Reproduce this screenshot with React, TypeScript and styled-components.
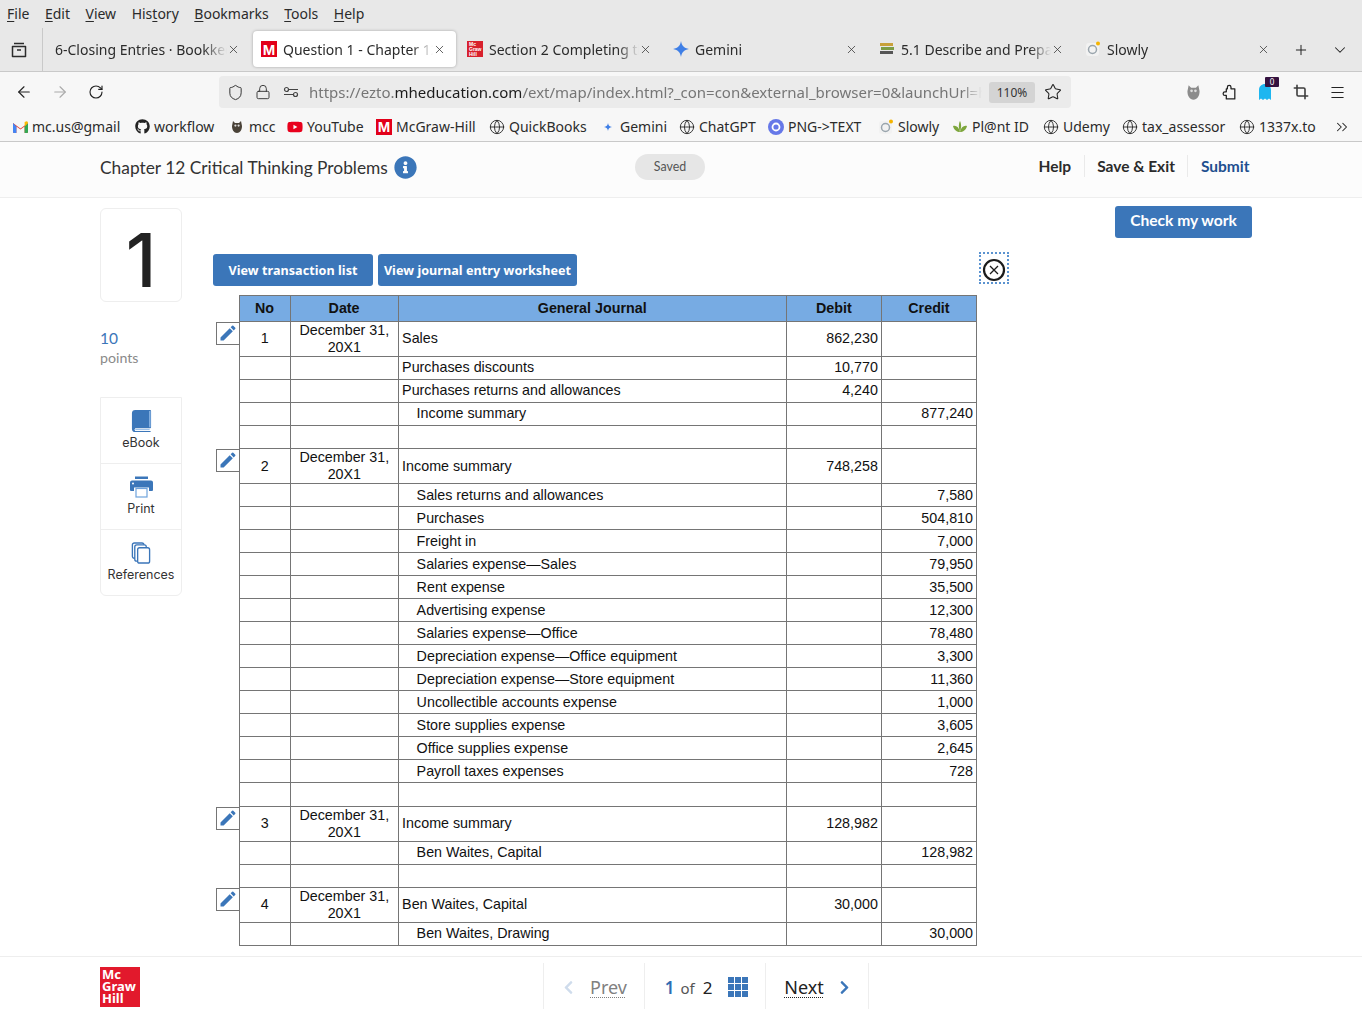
import React from "react";
import styled, { createGlobalStyle } from "styled-components";
import {
  ArrowLeft, ArrowRight, RotateCw, Shield, Lock, Star, Crop, Menu, X, Plus, ChevronDown, ChevronsRight, Globe,
} from "lucide-react";
import { FaGithub, FaYoutube, FaInfoCircle, FaChevronLeft, FaChevronRight } from "react-icons/fa";
import { MdEdit } from "react-icons/md";

const Global = createGlobalStyle`
  html, body { margin: 0; padding: 0; height: 1010px; overflow: hidden; background: #fff; }
  * { box-sizing: border-box; }
`;

const Page = styled.div`
  width: 1362px; height: 1010px; overflow: hidden; display: flex; flex-direction: column;
  font-family: "Noto Sans", sans-serif; color: #222;
`;
const MenuBar = styled.div`
  height: 28px; background: #e8e8e8; display: flex; align-items: center; padding: 0 0 1px 7px; gap: 15.5px;
  font-size: 14px; color: #2b2b2b;
`;
const MenuItem = styled.span`
  & u { text-decoration-thickness: 1px; text-underline-offset: 2px; }
`;
const TabBar = styled.div`
  height: 44px; background: #e8e8e8; display: flex; align-items: stretch; border-bottom: 1px solid #c9c9c9;
`;
const TabLead = styled.div`
  width: 43px; display: flex; align-items: center; justify-content: center; border-right: 1px solid #c9c9c9; padding-right: 4px;
`;
const TabStrip = styled.div`
  display: flex; gap: 3px; padding-left: 4px; width: 1240px;
`;
const Tab = styled.div<{ $active?: boolean }>`
  width: 203px; height: 36px; margin-top: 3px; flex: none; border-radius: 4px; padding: 0 10px 0 8px;
  display: flex; align-items: center; gap: 6px; font-size: 14px; color: #2b2b2b;
  background: ${(p) => (p.$active ? "#fff" : "transparent")};
  box-shadow: ${(p) => (p.$active ? "0 0 3px rgba(0,0,0,.3)" : "none")};
`;
const TabTitle = styled.span`
  flex: 1; min-width: 0; white-space: nowrap; overflow: hidden; margin-right: -6px;
  -webkit-mask-image: linear-gradient(to right, #000 86%, transparent 100%);
  mask-image: linear-gradient(to right, #000 86%, transparent 100%);
`;
const TabEnd = styled.div`
  display: flex; align-items: center; gap: 22px; padding-left: 10px;
`;
const RedM = styled.span<{ $s: number }>`
  width: ${(p) => p.$s}px; height: ${(p) => p.$s}px; background: #e2001a; color: #fff; flex: none;
  display: inline-flex; align-items: center; justify-content: center;
  font: 700 ${(p) => p.$s - 1}px/1 "Liberation Sans", sans-serif;
`;
const TinyMH = styled.span`
  width: 16px; height: 16px; background: #d8202c; color: #fff; flex: none;
  font: 700 5px/5px "Liberation Sans", sans-serif; padding: 1px 0 0 2px; white-space: pre;
`;
const NavBar = styled.div`
  height: 38px; background: #f7f7f7; display: flex; align-items: center; padding: 2px 0 0 6px;
`;
const NavBtn = styled.div`
  width: 36px; display: flex; align-items: center; justify-content: center;
`;
const UrlBar = styled.div`
  margin-left: 105px; width: 852px; height: 32px; border-radius: 4px; background: #ebebeb;
  display: flex; align-items: center; padding-left: 2px; font-size: 15px; color: #767676; flex: none;
`;
const UrlIcon = styled.div`
  width: 28px; display: flex; align-items: center; justify-content: center; flex: none;
`;
const UrlText = styled.div`
  width: 673px; overflow: hidden; white-space: nowrap; margin-left: 4px; flex: none;
  -webkit-mask-image: linear-gradient(to right, #000 97%, transparent 100%);
  mask-image: linear-gradient(to right, #000 97%, transparent 100%);
  & b { font-weight: 400; color: #1c1c1c; }
`;
const Zoom = styled.div`
  margin-left: 7px; width: 46px; height: 21px; background: #d4d4d4; border-radius: 3px; font-size: 12px; color: #333;
  display: flex; align-items: center; justify-content: center; flex: none;
`;
const StarBox = styled.div`
  width: 44px; display: flex; justify-content: center;
`;
const NavRight = styled.div`
  margin-left: 104px; display: flex; align-items: center;
`;
const Badge = styled.span`
  position: absolute; top: -6px; right: 4px; width: 14px; height: 10px; background: #35123f; color: #fff;
  font-size: 8px; line-height: 10px; text-align: center; border-radius: 1px;
`;
const BadgeHost = styled(NavBtn)`
  position: relative;
`;
const Bookmarks = styled.div`
  height: 32px; background: #f7f7f7; border-bottom: 1px solid #c9c9c9; display: flex; align-items: center; padding: 2px 0 0 12px;
  font-size: 14px; color: #2b2b2b;
`;
const Mark = styled.div<{ $w: number }>`
  flex: 0 0 ${(p) => p.$w}px; display: flex; align-items: center; gap: 4px; white-space: nowrap;
`;
const MarkIcon = styled.span`
  width: 16px; height: 16px; display: inline-flex; align-items: center; justify-content: center; flex: none;
`;
const AppHeader = styled.header`
  height: 56px; background: #fcfcfc; border-bottom: 1px solid #eeeeee; padding: 0 100px 6px 100px;
  display: flex; align-items: center; flex: none;
`;
const Title = styled.h1`
  margin: 2px 0 0; font: 400 17.35px "Lato", sans-serif; color: #333; display: flex; align-items: center; gap: 6px; width: 535px; flex: none;
`;
const Saved = styled.div`
  width: 70px; height: 26px; border-radius: 13px; background: #e6e6e6; color: #555; font: 400 12.4px "Lato", sans-serif;
  display: flex; align-items: center; justify-content: center;
`;
const HeadLinks = styled.nav`
  margin: -1px 0 0 auto; display: flex; align-items: center; font: 700 15.5px "Lato", sans-serif; color: #2b2b2b;
`;
const HeadLink = styled.a<{ $blue?: boolean; $sep?: boolean }>`
  padding: 2px 12.5px; color: ${(p) => (p.$blue ? "#1f4f8f" : "#2b2b2b")};
  border-left: ${(p) => (p.$sep ? "1px solid #eaeaea" : "none")};
`;
const Content = styled.main`
  flex: 1; display: flex; padding: 8px 0 0 100px; gap: 31px; min-height: 0;
`;
const Side = styled.aside`
  width: 82px; flex: none; display: flex; flex-direction: column; margin-top: 2px;
`;
const NumberCard = styled.div`
  height: 94px; border: 1px solid #eeeeee; border-radius: 6px; padding-top: 10px; display: flex; align-items: center; justify-content: center;
  font: 500 74px/1 "Inter", sans-serif; color: #222;
`;
const Points = styled.div`
  margin-top: 26px; font: 400 15.5px/20px "Lato", sans-serif; color: #3b76b9;
`;
const PointsLabel = styled.div`
  font: 400 14.2px/20px "Lato", sans-serif; color: #8a8a8a;
`;
const Tools = styled.div`
  margin-top: 29px; border: 1px solid #eeeeee; border-radius: 0 0 6px 6px; display: flex; flex-direction: column;
`;
const ToolItem = styled.div`
  height: 66px; display: flex; flex-direction: column; align-items: center; padding-top: 12px; gap: 3px;
  font: 400 12.5px/16px "Inter", sans-serif; color: #333; border-bottom: 1px solid #eeeeee;
  &:last-child { border-bottom: none; height: 65px; }
  & > svg { height: 22px; flex: none; }
`;
const Main = styled.div`
  width: 1039px; display: flex; flex-direction: column; flex: none;
`;
const CheckRow = styled.div`
  display: flex; justify-content: flex-end;
`;
const CheckBtn = styled.button`
  width: 137px; height: 32px; border: 0; border-radius: 3px; background: #3b76b9; color: #fff; padding: 0 0 5px;
  font: 700 15.6px "Lato", sans-serif;
`;
const ToolRow = styled.div`
  display: flex; align-items: flex-start; width: 796px; margin-top: 14px; gap: 5px;
`;
const BlueBtn = styled.button<{ $w: number }>`
  width: ${(p) => p.$w}px; height: 32px; border: 0; border-radius: 3px; background: #3b76b9; color: #fff; padding: 0;
  font: 700 12.6px "Noto Sans", sans-serif; letter-spacing: .05px; flex: none; margin-top: 2px;
`;
const CloseBox = styled.div`
  margin-left: auto; width: 30px; height: 32px; border: 2px dotted #5b93d0; padding-top: 3px; display: flex; align-items: center; justify-content: center;
`;
const Sheet = styled.table`
  margin-top: 9px; border-collapse: collapse; table-layout: fixed; width: 764px;
  font: 400 14.3px/17px "Liberation Sans", sans-serif; color: #111;
`;
const Gutter = styled.td`
  width: 26px; padding: 0; border: 0; vertical-align: top;
`;
const Pencil = styled.div`
  margin: 0 0 0 3px; width: 24px; height: 23px; padding-right: 1px; border: 1px solid #757575; border-right: 0; display: flex; align-items: center;
  justify-content: center; background: #fff; color: #3b76b9;
`;
const Th = styled.th<{ $w: number }>`
  width: ${(p) => p.$w}px; height: 26px; padding: 0; background: #77abe3; border: 1px solid #757575; font-weight: 700; text-align: center;
`;
const Td = styled.td<{ $align?: string; $indent?: boolean; $h: number; $up?: boolean }>`
  height: ${(p) => p.$h}px; border: 1px solid #757575; white-space: normal;
  padding: 0 3px ${(p) => (p.$up ? "2px" : "0")} ${(p) => (p.$indent ? "18px" : "3.5px")};
  text-align: ${(p) => p.$align || "left"};
`;
const FooterBar = styled.footer`
  height: 54px; border-top: 1px solid #eeeeee; padding-left: 100px; display: flex; flex: none;
`;
const Logo = styled.div`
  width: 40px; height: 40px; margin-top: 10px; background: #e2192c; color: #fff; padding: 1px 0 0 2px; flex: none;
  font: 700 13px/12px "Noto Sans", sans-serif; white-space: pre;
`;
const Pager = styled.div`
  margin-left: 403px; display: flex; height: 46px; margin-top: 6px; border-left: 1px solid #eeeeee;
`;
const PagerCell = styled.div<{ $w: number; $muted?: boolean; $gap?: number; $shift?: number }>`
  width: ${(p) => p.$w}px; border-right: 1px solid #eeeeee; display: flex; align-items: center; justify-content: center;
  gap: ${(p) => p.$gap ?? 14}px; padding: 2px 0 0 ${(p) => p.$shift ?? 0}px;
  font-size: 18px; color: ${(p) => (p.$muted ? "#808080" : "#222")};
`;
const PagerLink = styled.span`
  text-decoration: underline dotted 1px; text-underline-offset: 3px;
`;
const PageCount = styled.span`
  display: flex; align-items: baseline; gap: 6px; font-size: 17px;
  & b { color: #2f6db3; font-weight: 600; }
  & small { font-size: 15px; color: #555; margin-right: 2px; }
`;

const Gmail = () => (
  <svg width="15" height="12" viewBox="0 0 15 12"><path d="M0 2v9a1 1 0 0 0 1 1h2.4V5.6L7.5 8.6l4.1-3V12H14a1 1 0 0 0 1-1V2L7.5 7.4z" fill="#ea4335"/><path d="M0 2l3.4 3.6V12H1a1 1 0 0 1-1-1z" fill="#4285f4"/><path d="M15 2l-3.4 3.6V12H14a1 1 0 0 0 1-1z" fill="#34a853"/><path d="M11.6 5.6V1l2-.8c.6 0 1.4.6 1.4 1.8z" fill="#fbbc04"/></svg>
);
const Owl = ({ c = "#4a4238", s = 14 }: { c?: string; s?: number }) => (
  <svg width={s} height={s} viewBox="0 0 14 14"><path d="M3 1l2 2h4l2-2 1 5c0 4-2 7-5 7S2 10 2 6z" fill={c}/><circle cx="5.4" cy="5.6" r="1.1" fill="#ddd"/><circle cx="8.6" cy="5.6" r="1.1" fill="#ddd"/></svg>
);
const Sparkle = ({ s = 12, c = "#3f7fe6" }: { s?: number; c?: string }) => (
  <svg width={s} height={s} viewBox="0 0 12 12"><path d="M6 0c.5 3.400 2.100 5.300 6 6-3.900.7-5.500 2.600-6 6-.5-3.400-2.100-5.300-6-6 3.900-.7 5.500-2.600 6-6z" fill={c}/></svg>
);
const Books = () => (
  <svg width="16" height="14" viewBox="0 0 16 14"><rect x="1" y="1" width="13" height="3" fill="#c9a13a"/><rect x="2" y="5" width="13" height="3" fill="#7d9d45"/><rect x="1" y="9" width="13" height="3" fill="#555"/></svg>
);
const SlowlyIcon = () => (
  <svg width="16" height="16" viewBox="0 0 16 16"><rect x="1" y="2" width="13" height="13" rx="3" fill="#f2f2f2"/><circle cx="7.500" cy="8.500" r="4" fill="none" stroke="#9aa5ad" strokeWidth="1.500"/><circle cx="13" cy="2.500" r="2" fill="#f5b400"/></svg>
);
const PngIcon = () => (
  <svg width="16" height="16" viewBox="0 0 16 16"><circle cx="8" cy="8" r="8" fill="#6678e8"/><circle cx="8" cy="8" r="3.500" fill="none" stroke="#fff" strokeWidth="1.800"/></svg>
);
const Plant = () => (
  <svg width="16" height="14" viewBox="0 0 16 14"><path d="M8 12C7 7 4 5 1 6c1 4 4 6 7 6zM8 12c1-5 4-7 7-6-1 4-4 6-7 6zM8 11C6 7 7 3 8 1c1 2 2 6 0 10z" fill="#7da63c"/></svg>
);
const Archive = () => (
  <svg width="18" height="18" viewBox="0 0 18 18" fill="none" stroke="#2b2b2b" strokeWidth="1.500"><path d="M4 2.500h10M2.500 5.500h13v10h-13z" strokeLinejoin="round"/><path d="M7 9h4"/></svg>
);
const SiteSettings = () => (
  <svg width="16" height="16" viewBox="0 0 16 16" fill="none" stroke="#444" strokeWidth="1.200"><path d="M6 5.500h9M1 10.500h9"/><circle cx="3.500" cy="5.500" r="2"/><circle cx="12.500" cy="10.500" r="2"/></svg>
);
const Ghost = () => (
  <svg width="16" height="18" viewBox="0 0 16 18"><path d="M8 1c3.500 0 6 2.500 6 6v10l-2-1.500L10 17l-2-1.500L6 17l-2-1.500L2 17V7c0-3.500 2.500-6 6-6z" fill="#1eb6f0"/></svg>
);
const PuzzlePiece = () => (
  <svg width="17" height="17" viewBox="0 0 16 16" fill="none" stroke="#222" strokeWidth="1.200" strokeLinejoin="round"><path d="M6 4.500V3a1.700 1.700 0 0 1 3.400 0v1.500H13v9.500H5v-3.200H3.700a1.700 1.700 0 0 1 0-3.400H5V4.500z"/></svg>
);
const BookIcon = () => (
  <svg width="21" height="23" viewBox="0 0 21 23"><path d="M4 0h15.500a1 1 0 0 1 1 1v17a1 1 0 0 1-1 1H4a2 2 0 0 0 0 3h16v1H4a3.500 3.500 0 0 1-3.500-3.500V3.500A3.500 3.500 0 0 1 4 0z" fill="#3b76b9"/><path d="M18.500 1h1.500v17h-1.500z" fill="#8fb8e6"/><path d="M4 20h15v1H4z" fill="#8fb8e6"/></svg>
);
const PrintIcon = () => (
  <svg width="23" height="21" viewBox="0 0 23 21"><path d="M5 0h13v2.500H5z" fill="#3b76b9"/><path d="M2 4h19a2 2 0 0 1 2 2v7.500a1 1 0 0 1-1 1h-3V11H4v3.500H1a1 1 0 0 1-1-1V6a2 2 0 0 1 2-2z" fill="#3b76b9"/><circle cx="3" cy="7" r="1" fill="#fff"/><rect x="6" y="12" width="11" height="8.500" fill="#fff" stroke="#6fa3dc" strokeWidth="1.200"/></svg>
);
const Copies = () => (
  <svg width="20" height="23" viewBox="0 0 20 23" fill="none" stroke="#3b76b9" strokeWidth="1.400"><rect x="1" y="1" width="12" height="16" rx="2"/><rect x="3.500" y="3" width="12" height="17" rx="2" fill="#fff"/><rect x="6.500" y="6" width="12.500" height="16" rx="2" fill="#fff"/></svg>
);
const GridIcon = () => (
  <svg width="20" height="20" viewBox="0 0 20 20" fill="#3b76b9">
    {[0, 7, 14].map((y) => [0, 7, 14].map((x) => <rect key={`${x}-${y}`} x={x} y={y} width="6" height="6" />))}
  </svg>
);

const G = () => <Globe size={16} strokeWidth={1.4} color="#2b2b2b" />;
const bookmarks: [number, React.ReactNode, string][] = [
  [122, <Gmail />, "mc.us@gmail"],
  [95, <FaGithub size={15} color="#222" />, "workflow"],
  [58, <Owl />, "mcc"],
  [89, <FaYoutube size={16} color="#e8001c" />, "YouTube"],
  [113, <RedM $s={16}>M</RedM>, "McGraw-Hill"],
  [111, <G />, "QuickBooks"],
  [79, <Sparkle s={8} />, "Gemini"],
  [89, <G />, "ChatGPT"],
  [110, <PngIcon />, "PNG->TEXT"],
  [74, <SlowlyIcon />, "Slowly"],
  [91, <Plant />, "Pl@nt ID"],
  [79, <G />, "Udemy"],
  [117, <G />, "tax_assessor"],
  [94, <G />, "1337x.to"],
];
const tabs: [React.ReactNode, string, boolean?][] = [
  [null, "6-Closing Entries · Bookkeeping"],
  [<RedM $s={16}>M</RedM>, "Question 1 - Chapter 12 Critical", true],
  [<TinyMH>{"Mc\nGraw\nHill"}</TinyMH>, "Section 2 Completing the Accounting"],
  [<Sparkle s={16} />, "Gemini"],
  [<Books />, "5.1 Describe and Prepare Closing"],
  [<SlowlyIcon />, "Slowly"],
];
type R = { n?: string; t?: string; i?: boolean; d?: string; c?: string; up?: boolean; h?: number };
const rows: R[] = [
  { n: "1", t: "Sales", d: "862,230", up: true },
  { t: "Purchases discounts", d: "10,770", up: true },
  { t: "Purchases returns and allowances", d: "4,240", up: true },
  { t: "Income summary", i: true, c: "877,240", up: true },
  {},
  { n: "2", t: "Income summary", d: "748,258" },
  { t: "Sales returns and allowances", i: true, c: "7,580" },
  { t: "Purchases", i: true, c: "504,810" },
  { t: "Freight in", i: true, c: "7,000" },
  { t: "Salaries expense—Sales", i: true, c: "79,950" },
  { t: "Rent expense", i: true, c: "35,500" },
  { t: "Advertising expense", i: true, c: "12,300" },
  { t: "Salaries expense—Office", i: true, c: "78,480" },
  { t: "Depreciation expense—Office equipment", i: true, c: "3,300" },
  { t: "Depreciation expense—Store equipment", i: true, c: "11,360" },
  { t: "Uncollectible accounts expense", i: true, c: "1,000" },
  { t: "Store supplies expense", i: true, c: "3,605" },
  { t: "Office supplies expense", i: true, c: "2,645" },
  { t: "Payroll taxes expenses", i: true, c: "728" },
  { h: 24 },
  { n: "3", t: "Income summary", d: "128,982", up: true },
  { t: "Ben Waites, Capital", i: true, c: "128,982", up: true },
  {},
  { n: "4", t: "Ben Waites, Capital", d: "30,000", up: true },
  { t: "Ben Waites, Drawing", i: true, c: "30,000", up: true },
];

export default function App() {
  return (
    <Page>
      <Global />
      <MenuBar>
        {[["F", "ile"], ["E", "dit"], ["V", "iew"], ["His", "tory"], ["B", "ookmarks"], ["T", "ools"], ["H", "elp"]].map(([a, b]) => (
          <MenuItem key={a}>
            {a === "His" ? <>His<u>t</u>ory</> : <><u>{a}</u>{b}</>}
          </MenuItem>
        ))}
      </MenuBar>
      <TabBar>
        <TabLead><Archive /></TabLead>
        <TabStrip>
          {tabs.map(([icon, title, active]) => (
            <Tab key={title} $active={active}>
              {icon}
              <TabTitle>{title}</TabTitle>
              <X size={13} strokeWidth={1.4} color="#333" />
            </Tab>
          ))}
        </TabStrip>
        <TabEnd>
          <Plus size={16} strokeWidth={1.5} color="#222" />
          <ChevronDown size={18} strokeWidth={1.4} color="#222" />
        </TabEnd>
      </TabBar>
      <NavBar>
        <NavBtn><ArrowLeft size={18} strokeWidth={1.5} color="#222" /></NavBtn>
        <NavBtn><ArrowRight size={18} strokeWidth={1.5} color="#aaa" /></NavBtn>
        <NavBtn><RotateCw size={16} strokeWidth={1.7} color="#222" /></NavBtn>
        <UrlBar>
          <UrlIcon><Shield size={17} strokeWidth={1.4} color="#333" /></UrlIcon>
          <UrlIcon><Lock size={16} strokeWidth={1.4} color="#333" /></UrlIcon>
          <UrlIcon><SiteSettings /></UrlIcon>
          <UrlText>https://ezto.<b>mheducation.com</b>/ext/map/index.html?_con=con&amp;external_browser=0&amp;launchUrl=https</UrlText>
          <Zoom>110%</Zoom>
          <StarBox><Star size={18} strokeWidth={1.4} color="#222" /></StarBox>
        </UrlBar>
        <NavRight>
          <NavBtn><Owl c="#8c8c8c" s={17} /></NavBtn>
          <NavBtn><PuzzlePiece /></NavBtn>
          <BadgeHost><Ghost /><Badge>0</Badge></BadgeHost>
          <NavBtn><Crop size={16} strokeWidth={2.4} color="#3c3c3c" /></NavBtn>
          <NavBtn><Menu size={17} strokeWidth={1.5} color="#222" /></NavBtn>
        </NavRight>
      </NavBar>
      <Bookmarks>
        {bookmarks.map(([w, icon, label]) => (
          <Mark key={label} $w={w}>
            <MarkIcon>{icon}</MarkIcon>
            {label}
          </Mark>
        ))}
        <ChevronsRight size={18} strokeWidth={1.4} color="#222" />
      </Bookmarks>
      <AppHeader>
        <Title>Chapter 12 Critical Thinking Problems <FaInfoCircle size={23} color="#3b76b9" /></Title>
        <Saved>Saved</Saved>
        <HeadLinks>
          <HeadLink>Help</HeadLink>
          <HeadLink $sep>Save &amp; Exit</HeadLink>
          <HeadLink $sep $blue>Submit</HeadLink>
        </HeadLinks>
      </AppHeader>
      <Content>
        <Side>
          <NumberCard>1</NumberCard>
          <Points>10</Points>
          <PointsLabel>points</PointsLabel>
          <Tools>
            <ToolItem><BookIcon />eBook</ToolItem>
            <ToolItem><PrintIcon />Print</ToolItem>
            <ToolItem><Copies />References</ToolItem>
          </Tools>
        </Side>
        <Main>
          <CheckRow><CheckBtn>Check my work</CheckBtn></CheckRow>
          <ToolRow>
            <BlueBtn $w={160}>View transaction list</BlueBtn>
            <BlueBtn $w={199}>View journal entry worksheet</BlueBtn>
            <CloseBox>
              <svg width="24" height="24" viewBox="0 0 24 24" fill="none" stroke="#1b1b1b"><circle cx="12" cy="12" r="10" strokeWidth="2.200"/><path d="M8 8l8 8M16 8l-8 8" strokeWidth="1.300"/></svg>
            </CloseBox>
          </ToolRow>
          <Sheet>
            <thead>
              <tr>
                <Gutter as="th" />
                <Th $w={51}>No</Th>
                <Th $w={108}>Date</Th>
                <Th $w={388}>General Journal</Th>
                <Th $w={95}>Debit</Th>
                <Th $w={95}>Credit</Th>
              </tr>
            </thead>
            <tbody>
              {rows.map((r, i) => {
                const h = r.h ?? (r.n ? 35 : 23);
                return (
                  <tr key={i}>
                    <Gutter>{r.n && <Pencil><MdEdit size={20} /></Pencil>}</Gutter>
                    <Td $h={h} $up={r.up} $align="center">{r.n}</Td>
                    <Td $h={h} $align="center">{r.n && "December 31, 20X1"}</Td>
                    <Td $h={h} $up={r.up} $indent={r.i}>{r.t}</Td>
                    <Td $h={h} $up={r.up} $align="right">{r.d}</Td>
                    <Td $h={h} $up={r.up} $align="right">{r.c}</Td>
                  </tr>
                );
              })}
            </tbody>
          </Sheet>
        </Main>
      </Content>
      <FooterBar>
        <Logo>{"Mc\nGraw\nHill"}</Logo>
        <Pager>
          <PagerCell $w={101} $muted><FaChevronLeft size={15} color="#cfdcec" /><PagerLink>Prev</PagerLink></PagerCell>
          <PagerCell $w={121} $gap={16} $shift={3}><PageCount><b>1</b><small>of</small>2</PageCount><GridIcon /></PagerCell>
          <PagerCell $w={103} $gap={13} $shift={2}><PagerLink>Next</PagerLink><FaChevronRight size={15} color="#3b76b9" /></PagerCell>
        </Pager>
      </FooterBar>
    </Page>
  );
}
